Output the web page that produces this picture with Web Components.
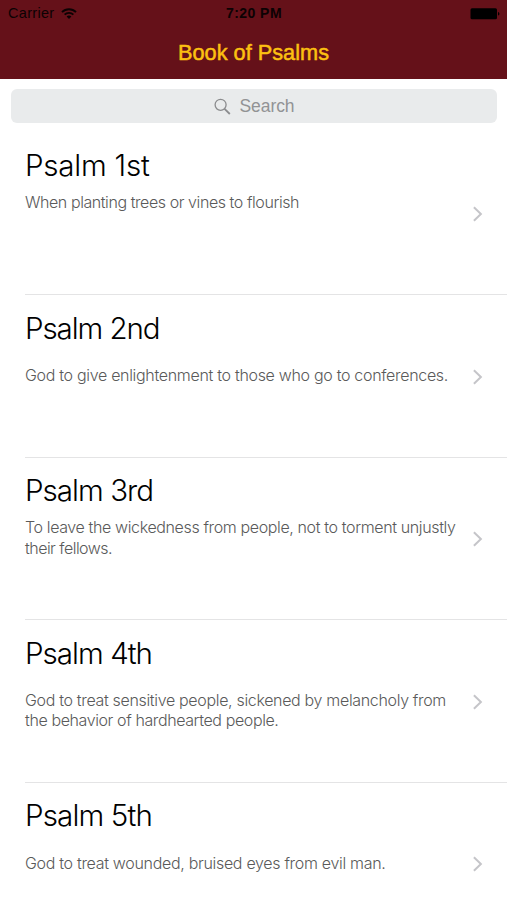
<!DOCTYPE html>
<html lang="en">
<head>
<meta charset="utf-8">
<title>Book of Psalms</title>
<style>
  html, body {
    margin: 0;
    height: 100%;
    overflow: hidden;
    background: #fff;
  }
</style>
</head>
<body>
<psalm-app></psalm-app>

<script>
/**
 * FitText - one line of text, tracked out or in to a given width
 *
 * <fit-text width="120">Some text</fit-text>
 */
class FitText extends HTMLElement {
  constructor() {
    super();
    this.attachShadow({ mode: 'open' });
  }

  connectedCallback() {
    this.shadowRoot.innerHTML = `
      <style>
        :host { display: block; white-space: nowrap; }
        span { display: inline-block; }
      </style>
      <span><slot></slot></span>
    `;
    const width = parseFloat(this.getAttribute('width'));
    const span = this.shadowRoot.querySelector('span');
    const natural = span.getBoundingClientRect().width;
    const count = this.textContent.length;
    if (width && natural) {
      span.style.letterSpacing = `${(width - natural) / count}px`;
    }
  }
}

class StatusBar extends HTMLElement {
  constructor() {
    super();
    this.attachShadow({ mode: 'open' });
    this.shadowRoot.innerHTML = `
      <style>
        :host {
          display: grid;
          grid-template-columns: 1fr auto 1fr;
          align-items: center;
          height: 27px;
          padding: 0 7px 0 8px;
          color: #0c0203;
          font-size: 14.5px;
          line-height: 27px;
        }
        .left { display: flex; align-items: center; gap: 6px; }
        .time { font-weight: 700; font-size: 14px; }
        .battery { justify-self: end; display: block; }
        svg { display: block; }
      </style>
      <div class="left">
        <fit-text width="46.5">Carrier</fit-text>
        <svg width="16" height="12" viewBox="0 0 16 12" fill="none" stroke="#0c0203" stroke-width="1.9">
          <path d="M1 4.1a9.9 9.9 0 0 1 14 0"/>
          <path d="M3.6 6.7a6.2 6.2 0 0 1 8.8 0"/>
          <path d="M8 11 5.6 8.6a3.4 3.4 0 0 1 4.8 0z" fill="#0c0203" stroke="none"/>
        </svg>
      </div>
      <fit-text class="time" width="56">7:20 PM</fit-text>
      <svg class="battery" width="30" height="12" viewBox="0 0 30 12" fill="#000">
        <rect x="0.5" y="0.3" width="26.5" height="11" rx="1.5"/>
        <path d="M28 4c1.9.3 1.9 3.3 0 3.6z"/>
      </svg>
    `;
  }
}

class NavBar extends HTMLElement {
  constructor() {
    super();
    this.attachShadow({ mode: 'open' });
    this.shadowRoot.innerHTML = `
      <style>
        :host {
          display: block;
          box-sizing: border-box;
          height: 79px;
          background: #651119;
        }
        .title {
          display: flex;
          justify-content: center;
          height: 51px;
          line-height: 51px;
          color: #fcc011;
          font-size: 21.7px;
          -webkit-text-stroke: 0.5px #fcc011;
        }
      </style>
      <status-bar></status-bar>
      <div class="title"><slot></slot></div>
    `;
  }
}

class SearchField extends HTMLElement {
  constructor() {
    super();
    this.attachShadow({ mode: 'open' });
    this.shadowRoot.innerHTML = `
      <style>
        :host {
          display: flex;
          align-items: center;
          justify-content: center;
          gap: 9px;
          height: 34px;
          margin: 10px 10px 9.5px 11px;
          border-radius: 6px;
          background: #e9ebec;
          color: #929395;
          font-size: 17.5px;
        }
        svg { display: block; }
      </style>
      <svg width="17" height="17" viewBox="0 0 17 17" fill="none" stroke="#8b8c8e">
        <circle cx="6.6" cy="6.8" r="5.5" stroke-width="1.3"/>
        <path d="m10.6 10.8 5.2 5.2" stroke-width="1.8"/>
      </svg>
      <slot></slot>
    `;
  }
}

class PsalmRow extends HTMLElement {
  constructor() {
    super();
    this.attachShadow({ mode: 'open' });
    this.shadowRoot.innerHTML = `
      <style>
        :host {
          display: grid;
          grid-template-columns: 1fr auto;
          box-sizing: border-box;
          height: 162.5px;
          margin-left: 25px;
          padding-right: 24px;
          border-bottom: 1px solid #e4e4e5;
        }
        .text { padding-top: 14.5px; }
        .title {
          color: #000;
          font: 300 29.5px/36px Inter, "Liberation Sans", sans-serif;
        }
        .note {
          padding-top: 19.5px;
          color: #5a5a5a;
          font: 300 16px/20.3px Inter, "Liberation Sans", sans-serif;
        }
        :host([compact]) .note { padding-top: 9.3px; }
        svg { display: block; align-self: center; margin-top: 2px; }
      </style>
      <div class="text">
        <div class="title"><slot name="title"></slot></div>
        <div class="note"><slot></slot></div>
      </div>
      <svg width="11" height="16" viewBox="0 0 11 16" fill="none" stroke="#c5c5c9" stroke-width="2">
        <path d="M1.9 1.2 8.9 8l-7 6.8"/>
      </svg>
    `;
  }
}

class PsalmApp extends HTMLElement {
  constructor() {
    super();
    this.attachShadow({ mode: 'open' });
    this.shadowRoot.innerHTML = `
      <style>
        :host {
          display: block;
          height: 900px;
          overflow: hidden;
          background: #fff;
          font-family: "Liberation Sans", Arial, sans-serif;
        }
      </style>
      <nav-bar><fit-text width="151">Book of Psalms</fit-text></nav-bar>
      <search-field><fit-text width="55">Search</fit-text></search-field>
      <psalm-row compact>
        <fit-text slot="title" width="124.5">Psalm 1st</fit-text>
        <fit-text width="274">When planting trees or vines to flourish</fit-text>
      </psalm-row>
      <psalm-row>
        <fit-text slot="title" width="134.5">Psalm 2nd</fit-text>
        <fit-text width="423">God to give enlightenment to those who go to conferences.</fit-text>
      </psalm-row>
      <psalm-row compact>
        <fit-text slot="title" width="128">Psalm 3rd</fit-text>
        <fit-text width="430.5">To leave the wickedness from people, not to torment unjustly</fit-text>
        <fit-text width="87">their fellows.</fit-text>
      </psalm-row>
      <psalm-row>
        <fit-text slot="title" width="127">Psalm 4th</fit-text>
        <fit-text width="421">God to treat sensitive people, sickened by melancholy from</fit-text>
        <fit-text width="253.5">the behavior of hardhearted people.</fit-text>
      </psalm-row>
      <psalm-row>
        <fit-text slot="title" width="127">Psalm 5th</fit-text>
        <fit-text width="360.5">God to treat wounded, bruised eyes from evil man.</fit-text>
      </psalm-row>
    `;
  }
}

// Containers first, so that lines are measured in their final font
customElements.define('status-bar', StatusBar);
customElements.define('nav-bar', NavBar);
customElements.define('search-field', SearchField);
customElements.define('psalm-row', PsalmRow);
customElements.define('psalm-app', PsalmApp);
customElements.define('fit-text', FitText);
</script>
</body>
</html>
